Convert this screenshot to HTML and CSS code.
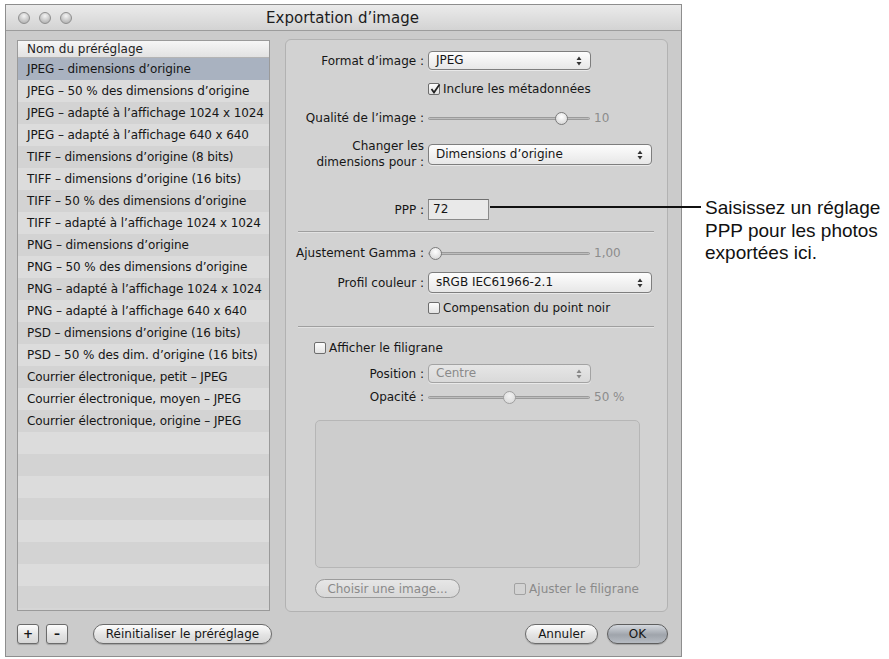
FILE: index.html
```html
<!DOCTYPE html>
<html>
  <head>
    <title>Exportation d'image</title>
    <meta charset="UTF-8" />
    <link rel="stylesheet" href="styles.css">
  </head>
  <body>
    <div class="window">
      <header class="titlebar">
        <div class="lights"><span></span><span></span><span></span></div>
        <h1>Exportation d’image</h1>
      </header>

      <div class="content">
        <div class="list">
          <div class="list-head">Nom du préréglage</div>
          <div class="row sel">JPEG – dimensions d’origine</div>
          <div class="row">JPEG – 50 % des dimensions d’origine</div>
          <div class="row">JPEG – adapté à l’affichage 1024 x 1024</div>
          <div class="row">JPEG – adapté à l’affichage 640 x 640</div>
          <div class="row">TIFF – dimensions d’origine (8 bits)</div>
          <div class="row">TIFF – dimensions d’origine (16 bits)</div>
          <div class="row">TIFF – 50 % des dimensions d’origine</div>
          <div class="row">TIFF – adapté à l’affichage 1024 x 1024</div>
          <div class="row">PNG – dimensions d’origine</div>
          <div class="row">PNG – 50 % des dimensions d’origine</div>
          <div class="row">PNG – adapté à l’affichage 1024 x 1024</div>
          <div class="row">PNG – adapté à l’affichage 640 x 640</div>
          <div class="row">PSD – dimensions d’origine (16 bits)</div>
          <div class="row">PSD – 50 % des dim. d’origine (16 bits)</div>
          <div class="row">Courrier électronique, petit – JPEG</div>
          <div class="row">Courrier électronique, moyen – JPEG</div>
          <div class="row">Courrier électronique, origine – JPEG</div>
          <div class="row"></div>
          <div class="row"></div>
          <div class="row"></div>
          <div class="row"></div>
          <div class="row"></div>
          <div class="row"></div>
          <div class="row"></div>
          <div class="row"></div>
        </div>

        <section class="panel">
          <div class="field r-format">
            <label><span>Format d’image :</span></label>
            <div class="popup w-short">JPEG<svg class="arrows" width="6" height="10" viewBox="0 0 6 10"><path d="M3 0.5 L5.5 4 H0.5 Z M3 9.5 L5.5 6 H0.5 Z" fill="#333"/></svg></div>
          </div>
          <div class="check-row r-meta">
            <span class="box on"><svg width="12" height="12" viewBox="0 0 12 12"><path d="M2.5 6 L5 9.5 L10.5 1.5" fill="none" stroke="#222" stroke-width="1.8"/></svg></span>
            Inclure les métadonnées
          </div>
          <div class="field r-quality">
            <label><span>Qualité de l’image :</span></label>
            <div class="slider"><span class="knob" style="left: 126px"></span></div>
            <span class="value">10</span>
          </div>
          <div class="field r-size">
            <label class="two"><span>Changer les<br>dimensions pour :</span></label>
            <div class="popup w-long">Dimensions d’origine<svg class="arrows" width="6" height="10" viewBox="0 0 6 10"><path d="M3 0.5 L5.5 4 H0.5 Z M3 9.5 L5.5 6 H0.5 Z" fill="#333"/></svg></div>
          </div>
          <div class="field r-ppp">
            <label><span>PPP :</span></label>
            <div class="textfield">72</div>
          </div>
          <div class="sep s-one"></div>
          <div class="field r-gamma">
            <label><span>Ajustement Gamma :</span></label>
            <div class="slider"><span class="knob" style="left: 0px"></span></div>
            <span class="value">1,00</span>
          </div>
          <div class="field r-profile">
            <label><span>Profil couleur :</span></label>
            <div class="popup w-long">sRGB IEC61966-2.1<svg class="arrows" width="6" height="10" viewBox="0 0 6 10"><path d="M3 0.5 L5.5 4 H0.5 Z M3 9.5 L5.5 6 H0.5 Z" fill="#333"/></svg></div>
          </div>
          <div class="check-row r-black">
            <span class="box"></span>
            Compensation du point noir
          </div>
          <div class="sep s-two"></div>
          <div class="check-row r-mark">
            <span class="box"></span>
            Afficher le filigrane
          </div>
          <div class="field r-position">
            <label><span>Position :</span></label>
            <div class="popup w-short off">Centre<svg class="arrows" width="6" height="10" viewBox="0 0 6 10"><path d="M3 0.5 L5.5 4 H0.5 Z M3 9.5 L5.5 6 H0.5 Z" fill="#888"/></svg></div>
          </div>
          <div class="field r-opacity">
            <label><span>Opacité :</span></label>
            <div class="slider off"><span class="knob" style="left: 74px"></span></div>
            <span class="value">50 %</span>
          </div>
          <div class="well"></div>
          <div class="well-bar">
            <button type="button" class="btn off">Choisir une image...</button>
            <span class="check-row off"><span class="box"></span>Ajuster le filigrane</span>
          </div>
        </section>
      </div>

      <footer class="bottom">
        <div class="group">
          <button type="button" class="btn square">+</button>
          <button type="button" class="btn square">–</button>
          <button type="button" class="btn reset">Réinitialiser le préréglage</button>
        </div>
        <div class="group">
          <button type="button" class="btn cancel">Annuler</button>
          <button type="button" class="btn ok">OK</button>
        </div>
      </footer>
    </div>

    <div class="callout">
      <div class="leader"></div>
      <p>Saisissez un réglage<br>PPP pour les photos<br>exportées ici.</p>
    </div>
  </body>
</html>
```

FILE: styles.css
```css
body {
  margin: 0;
  background: #fff;
  font-family: "DejaVu Sans", "Noto Sans", sans-serif;
  font-size: 12px;
  color: #161616;
}
.window {
  position: relative;
  width: 675px;
  height: 651px;
  margin: 4px 0 0 5px;
  border: 1px solid #8e8e8e;
  background: #cbcbcb;
  display: flex;
  flex-direction: column;
}
.titlebar {
  height: 25px;
  border-bottom: 1px solid #9c9c9c;
  background: linear-gradient(#ebebeb, #d3d3d3);
  display: flex;
  align-items: center;
  position: relative;
}
.lights {
  display: flex;
  gap: 9px;
  margin-left: 12px;
}
.lights span {
  width: 12px;
  height: 12px;
  border-radius: 50%;
  border: 1px solid #8f8f8f;
  box-sizing: border-box;
  background: radial-gradient(circle at 50% 30%, #f4f4f4, #bdbdbd 70%, #a8a8a8);
}
h1 {
  flex: 1;
  margin: 0 0 0 -68px;
  text-align: center;
  font-weight: normal;
  font-size: 15px;
  color: #1c1c1c;
}
.content {
  display: flex;
  gap: 15px;
  padding: 8px 13px 0 11px;
}

/* preset list */
.list {
  width: 251px;
  height: 569px;
  margin-top: 1px;
  border: 1px solid #9a9a9a;
  background: #d6d6d6;
  overflow: hidden;
}
.list-head {
  height: 16px;
  line-height: 16px;
  padding-left: 9px;
  border-bottom: 1px solid #b4b4b4;
  background: linear-gradient(#f6f6f6, #e2e2e2);
  color: #222;
}
.row {
  height: 22px;
  line-height: 22px;
  padding-left: 9px;
  white-space: nowrap;
  letter-spacing: -0.1px;
  background: #d3d3d3;
}
.row:nth-child(odd) {
  background: #dcdcdc;
}
.row.sel {
  background: #a9b2c0;
}

/* settings panel */
.panel {
  width: 356px;
  height: 560px;
  border: 1px solid #b2b2b2;
  border-radius: 6px;
  background: #d2d2d2;
  padding: 11px 13px 0 12px;
}
.field {
  display: flex;
  align-items: center;
}
.field label {
  width: 126px;
  margin-right: 4px;
  flex-shrink: 0;
  display: flex;
  justify-content: flex-end;
  text-align: right;
  white-space: nowrap;
}
.field label.two {
  line-height: 16px;
}
.popup {
  height: 17px;
  line-height: 17px;
  border: 1px solid #7e7e7e;
  border-radius: 4px;
  background: linear-gradient(#fdfdfd, #e7e7e7);
  padding-left: 7px;
  position: relative;
  box-shadow: 0 1px 0 rgba(255, 255, 255, 0.5);
}
.popup .arrows {
  position: absolute;
  right: 8px;
  top: 4px;
}
.w-short {
  width: 154px;
}
.w-long {
  width: 215px;
  height: 19px;
  line-height: 19px;
}
.w-long .arrows {
  top: 5px;
}
.popup.off {
  color: #8a8a8a;
  border-color: #a3a3a3;
  background: linear-gradient(#e6e6e6, #d9d9d9);
}
.check-row {
  display: flex;
  align-items: center;
  gap: 3px;
}
.box {
  width: 12px;
  height: 12px;
  box-sizing: border-box;
  border: 1px solid #6d6d6d;
  border-radius: 2px;
  background: linear-gradient(#fcfcfc, #e3e3e3);
  display: inline-block;
}
.box svg {
  display: block;
  margin: -1px 0 0 -0.5px;
}
.slider {
  width: 162px;
  height: 3px;
  border: 1px solid #9b9b9b;
  border-radius: 2px;
  background: #bdbdbd;
  box-sizing: border-box;
  position: relative;
}
.knob {
  position: absolute;
  top: -6px;
  width: 13px;
  height: 13px;
  box-sizing: border-box;
  border-radius: 50%;
  border: 1px solid #7b7b7b;
  background: radial-gradient(circle at 50% 35%, #ffffff, #dedede 70%, #c8c8c8);
}
.slider.off .knob {
  border-color: #a0a0a0;
  background: radial-gradient(circle at 50% 35%, #f2f2f2, #d6d6d6);
}
.value {
  margin-left: 4px;
  color: #8c8c8c;
}
.textfield {
  width: 55px;
  height: 19px;
  line-height: 19px;
  padding-left: 4px;
  border: 1px solid #8a8a8a;
  border-top-color: #6f6f6f;
  background: #e9e9e9;
}
.sep {
  height: 1px;
  background: #9f9f9f;
  border-bottom: 1px solid #e2e2e2;
}

/* vertical rhythm of the panel */
.r-format { height: 19px; }
.r-meta { margin: 11px 0 0 130px; height: 16px; }
.r-quality { margin-top: 13px; height: 16px; }
.r-size { margin-top: 12px; height: 32px; }
.r-ppp { margin-top: 29px; height: 21px; }
.s-one { margin-top: 11px; }
.r-gamma { margin-top: 12px; height: 16px; }
.r-profile { margin-top: 11px; height: 21px; }
.r-black { margin: 7px 0 0 130px; height: 16px; }
.s-two { margin-top: 10px; }
.r-mark { margin: 12px 0 0 16px; height: 16px; }
.r-position { margin-top: 8px; height: 19px; }
.r-opacity { margin-top: 6px; height: 16px; }
.well {
  margin: 15px 0 0 17px;
  width: 323px;
  height: 146px;
  border: 1px solid #b6b6b6;
  border-radius: 5px;
  background: #cdcdcd;
}
.well-bar {
  display: flex;
  align-items: center;
  justify-content: space-between;
  margin: 11px 15px 0 17px;
}

/* buttons */
.btn {
  font-family: inherit;
  font-size: 12px;
  color: #161616;
  height: 20px;
  padding: 0 8px;
  border: 1px solid #6b6b6b;
  border-radius: 10px;
  background: linear-gradient(#fdfdfd, #e3e3e3 55%, #d6d6d6);
  box-shadow: 0 1px 1px rgba(0, 0, 0, 0.2);
  white-space: nowrap;
}
.btn.off {
  color: #8a8a8a;
  border-color: #9c9c9c;
  background: linear-gradient(#e6e6e6, #d8d8d8);
  box-shadow: none;
  width: 145px;
  height: 19px;
}
.check-row.off {
  color: #8a8a8a;
}
.check-row.off .box {
  border-color: #a2a2a2;
  background: #d3d3d3;
}
.bottom {
  display: flex;
  justify-content: space-between;
  padding: 12px 13px 0 11px;
}
.group {
  display: flex;
  gap: 7px;
}
.btn.square {
  width: 22px;
  padding: 0;
  border-radius: 3px;
  font-weight: bold;
}
.btn.reset {
  width: 179px;
  margin-left: 18px;
}
.btn.cancel {
  width: 73px;
}
.btn.ok {
  width: 61px;
  margin-left: 2px;
  border-color: #5e5e5e;
  background: linear-gradient(#d4d8de, #9fa4ab 55%, #b6bbc2);
}

/* annotation */
.callout {
  position: absolute;
  left: 490px;
  top: 197px;
  display: flex;
  align-items: flex-start;
}
.leader {
  width: 211px;
  height: 2px;
  margin-top: 9px;
  background: #111;
}
.callout p {
  margin: 0 0 0 4px;
  font-family: "Liberation Sans", Arial, sans-serif;
  font-size: 19px;
  line-height: 22.5px;
  color: #111;
  white-space: nowrap;
}
```
